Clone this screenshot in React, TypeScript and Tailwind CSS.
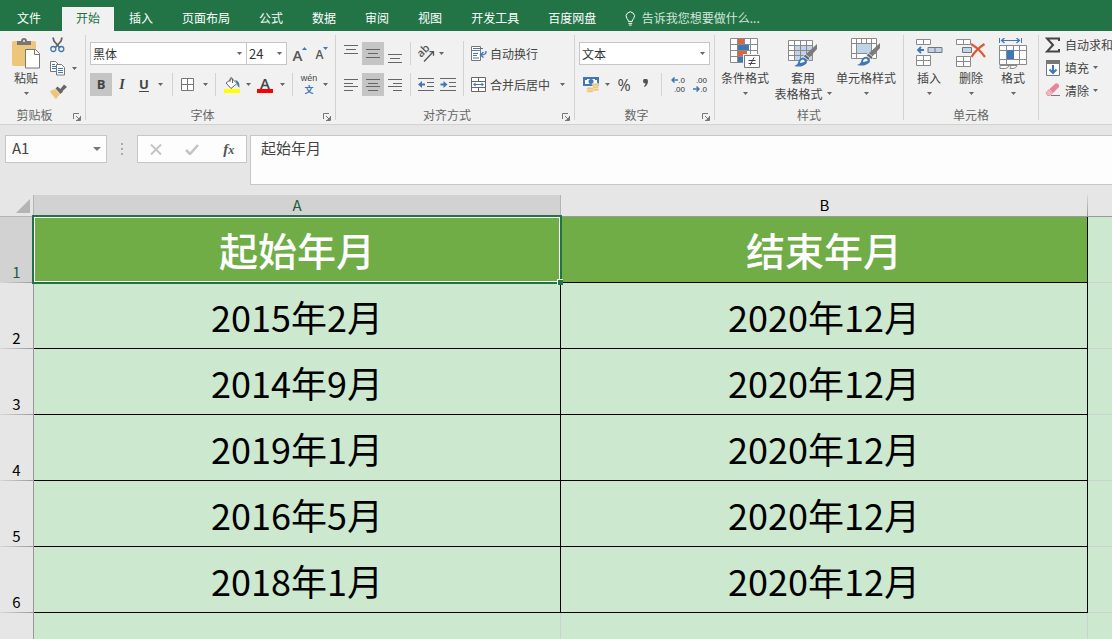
import { type ReactNode } from 'react'
import clsx from 'clsx'

// ─── Data ─────────────────────────────────────────────────────────────────────

const TABS = ['开始', '插入', '页面布局', '公式', '数据', '审阅', '视图', '开发工具', '百度网盘']

const ROWS = [
  ['起始年月', '结束年月'],
  ['2015年2月', '2020年12月'],
  ['2014年9月', '2020年12月'],
  ['2019年1月', '2020年12月'],
  ['2016年5月', '2020年12月'],
  ['2018年1月', '2020年12月'],
  ['', ''],
]

// ─── Small parts ──────────────────────────────────────────────────────────────

function Caret() {
  return (
    <svg width="5" height="3" viewBox="0 0 5 3" className="shrink-0" aria-hidden="true">
      <path d="M0 0h5L2.5 3z" fill="#666" />
    </svg>
  )
}

function MoreButton({ label, className }: { label: string; className?: string }) {
  return (
    <button aria-label={label} className={clsx('flex h-full w-2 items-center justify-center', className)}>
      <Caret />
    </button>
  )
}

function Tool({ label, active, className, children }: { label: string; active?: boolean; className: string; children: ReactNode }) {
  return (
    <button
      aria-label={label}
      className={clsx('flex h-full shrink-0 items-center justify-center', active && 'bg-[#c5c5c5]', className)}
    >
      {children}
    </button>
  )
}

function Divider({ className }: { className?: string }) {
  return <div className={clsx('w-px shrink-0 self-stretch bg-[#d2d2d2]', className)} />
}

function Row({ children }: { children: ReactNode }) {
  return <div className="flex h-[23px] items-center">{children}</div>
}

function Group({ label, launcher, className, children }: { label: string; launcher?: boolean; className: string; children: ReactNode }) {
  return (
    <>
      <section aria-label={label} className={clsx('flex shrink-0 flex-col justify-between pb-px', className)}>
        <div className="flex">{children}</div>
        <div className="flex h-4 items-center text-[#666]">
          <span className="flex-1 text-center">{label}</span>
          {launcher && (
            <button aria-label={`${label}设置`} className="flex w-4 justify-center pt-1">
              <svg width="8" height="8" viewBox="0 0 8 8" fill="none" stroke="#777">
                <path d="M.5 6V.5H6M3 3l3 3M7.5 3v4.500H3" />
                <path d="M7 4v3H4z" fill="#777" stroke="none" />
              </svg>
            </button>
          )}
        </div>
      </section>
      <Divider className="mt-1 mb-1" />
    </>
  )
}

function BigButton({ icon, label, second, className }: { icon: ReactNode; label: string; second?: string; className: string }) {
  return (
    <button className={clsx('flex shrink-0 flex-col items-center pt-[7px] leading-[15px] whitespace-nowrap', className)}>
      <span className="flex h-8 items-start">{icon}</span>
      <span>{label}</span>
      <span className="flex h-4 items-center gap-1">
        {second}
        <Caret />
      </span>
    </button>
  )
}

function Picker({ label, value, className }: { label: string; value: string; className: string }) {
  return (
    <div className={clsx('grid h-[23px] shrink-0 items-center border border-[#c6c6c6] bg-white', className)}>
      <select
        aria-label={label}
        defaultValue={value}
        className="col-start-1 row-start-1 h-full w-full appearance-none bg-transparent pl-0.5 text-[#333] outline-none"
      >
        <option>{value}</option>
      </select>
      <span className="pointer-events-none col-start-1 row-start-1 justify-self-end pr-1">
        <Caret />
      </span>
    </div>
  )
}

// ─── Icons ────────────────────────────────────────────────────────────────────

function PasteIcon() {
  return (
    <svg width="28" height="31" viewBox="0 0 28 31">
      <path d="M0 5q0-2 2-2h20q2 0 2 2v23H2q-2 0-2-2z" fill="#eec679" />
      <path d="M5 7V3h4a3 3 0 0 1 6 0h4v4z" fill="#777" />
      <circle cx="12" cy="3" r="1" fill="#f1f1f1" />
      <path d="M13.500 11.500h10l4 4v14.500h-14z" fill="#fff" stroke="#777" />
      <path d="M22.500 11.500v5h5" fill="none" stroke="#777" />
    </svg>
  )
}

function CutIcon() {
  return (
    <svg width="15" height="16" viewBox="0 0 15 16" fill="none">
      <path d="M3 .5 4 4l6 7M12 .5 11 4l-6 7" stroke="#666" strokeWidth="1.800" />
      <circle cx="3.300" cy="12" r="2.500" stroke="#3f78b5" strokeWidth="1.300" />
      <circle cx="11.300" cy="12" r="2.500" stroke="#3f78b5" strokeWidth="1.300" />
    </svg>
  )
}

function CopyIcon() {
  return (
    <svg width="16" height="15" viewBox="0 0 16 15" fill="#fff" stroke="#777">
      <path d="M.5.5h5l3 3v7h-8z" />
      <path d="M2 3.500h3M2 5.500h4M2 7.500h4" stroke="#3f78b5" />
      <path d="M6.500 3.500h5l3 3v7.500h-8z" />
      <path d="M8 7.500h5M8 9.500h5M8 11.500h5" stroke="#3f78b5" />
    </svg>
  )
}

function BrushIcon() {
  return (
    <svg width="17" height="15" viewBox="0 0 17 15">
      <path d="M0 7 5 5l5 5-4 5q-2-1-2.500-3Q1 10 0 7z" fill="#eec679" />
      <path d="m5.500 4.500 2-2L11.500 6 13 7.500 10.500 10z" fill="#666" />
      <path d="m10 5.500 4-5 3 2.500-5 4.500z" fill="#666" />
    </svg>
  )
}

function FontStep({ up }: { up?: boolean }) {
  return (
    <span className="flex h-3.5 items-end text-[#555]">
      <span className={clsx('font-[Open_Sans] leading-3 font-semibold', up ? 'text-[15px]' : 'text-xs')}>A</span>
      <svg width="5" height="3" viewBox="0 0 5 3" className="self-start">
        <path d={up ? 'M0 3h5L2.500 0z' : 'M0 0h5L2.500 3z'} fill="#3f78b5" />
      </svg>
    </span>
  )
}

function BorderIcon() {
  return (
    <svg width="13" height="13" viewBox="0 0 13 13" fill="#fff" stroke="#777">
      <path d="M.5.5h12v12H.5zM6.500.5v12M.5 6.500h12" />
    </svg>
  )
}

function FillIcon() {
  return (
    <svg width="16" height="16" viewBox="0 0 16 16">
      <path d="m2 6 6-4.500 5 5L7 11.500z" fill="#fff" stroke="#666" />
      <path d="M6 5V1.500q1.500-2 2.500 0V6" fill="none" stroke="#666" />
      <path d="M11 3Q16 3.500 15.500 10.500q-2-.5-2.500-4z" fill="#3f78b5" />
      <path d="M0 12h16v4H0z" fill="#ff0" />
    </svg>
  )
}

const VALIGN_Y = { top: 0, middle: 4, bottom: 9 }

function VAlignIcon({ at }: { at: keyof typeof VALIGN_Y }) {
  return (
    <svg width="14" height="18" viewBox="0 0 14 18" stroke="#666">
      <path d={`M0 ${VALIGN_Y[at] + 0.5}h14m-12 4h10m-12 4h14`} />
    </svg>
  )
}

const HALIGN = {
  left: 'M0 .5h14M0 4.500h9M0 7.500h14M0 11.500h9',
  center: 'M0 .5h14M2 4.500h10M0 7.500h14M2 11.500h10',
  right: 'M0 .5h14M5 4.500h9M0 7.500h14M5 11.500h9',
}

function HAlignIcon({ at }: { at: keyof typeof HALIGN }) {
  return (
    <svg width="14" height="12" viewBox="0 0 14 12" stroke="#666">
      <path d={HALIGN[at]} />
    </svg>
  )
}

function OrientIcon() {
  return (
    <svg width="17" height="16" viewBox="0 0 17 16">
      <text x="3" y="12" transform="rotate(-45 3 12)" fill="#555" className="font-[Open_Sans] text-[11px] font-semibold">
        ab
      </text>
      <path d="m6 15.500 9-9.500M11.500 5.700h4v4" fill="none" stroke="#555" strokeWidth="1.300" />
    </svg>
  )
}

function IndentIcon({ out }: { out?: boolean }) {
  return (
    <svg width="16" height="13" viewBox="0 0 16 13">
      <path d="M0 .5h16M9 4.500h7M9 8.500h7M0 12.500h16" stroke="#666" />
      <path d={out ? 'M0 6.500 4 3v2.500h3v2H4V10z' : 'M7.500 6.500 3.500 3v2.500h-3v2h3V10z'} fill="#3f78b5" />
    </svg>
  )
}

function WrapIcon() {
  return (
    <svg width="16" height="15" viewBox="0 0 16 15" fill="none">
      <path d="M.5.5h9v4h-9zM.5 4.500h9v10h-9z" fill="#fff" stroke="#777" />
      <path d="M2 2.500h10M2 7.500h5M2 9.500h4M2 12h6" stroke="#3f78b5" />
      <path d="M15 5q.5 4-5 4m2.500-3L9.500 9l3 2.500" stroke="#3f78b5" strokeWidth="1.400" />
    </svg>
  )
}

function MergeIcon() {
  return (
    <svg width="16" height="15" viewBox="0 0 16 15">
      <path d="M.5.5h14v14H.5zM.5 4.500h14M.5 10.500h14M7.500.5v4M7.500 10.500v4" fill="#fff" stroke="#666" />
      <path d="M3 7.500h9" stroke="#3f78b5" />
      <path d="M2 7.500 4.500 5.500v4zM13 7.500 10.500 5.500v4z" fill="#3f78b5" />
    </svg>
  )
}

function MoneyIcon() {
  return (
    <svg width="17" height="16" viewBox="0 0 17 16">
      <path d="M0 0h16v9H0z" fill="#3f78b5" />
      <path d="M2 2h12v5H2z" fill="#fff" />
      <circle cx="8" cy="4.500" r="2.500" fill="#3f78b5" />
      <path d="M2 2h2v1H2zM12 2h2v1h-2z" fill="#3f78b5" />
      <g fill="#eec679" stroke="#f1f1f1" strokeWidth=".5">
        <ellipse cx="12.500" cy="12.500" rx="3.500" ry="1.500" />
        <ellipse cx="12.500" cy="10" rx="3.500" ry="1.500" />
        <ellipse cx="12.500" cy="7.500" rx="3.500" ry="1.500" />
        <ellipse cx="7" cy="14" rx="3.500" ry="1.500" />
        <ellipse cx="7" cy="11.500" rx="3.500" ry="1.500" />
      </g>
    </svg>
  )
}

function DecimalIcon({ more }: { more?: boolean }) {
  const arrow = (
    <svg width="7" height="6" viewBox="0 0 7 6">
      <path d={more ? 'M7 3H1m2.500-2.500L1 3l2.500 2.500' : 'M0 3h6M3.500.5 6 3 3.500 5.500'} fill="none" stroke="#3f78b5" strokeWidth="1.500" />
    </svg>
  )
  return (
    <span className="flex w-4 flex-col items-end font-[Liberation_Sans] text-[8px] leading-[9px] text-[#333]">
      <span className="flex items-center">{more && arrow}{more ? '.0' : '.00'}</span>
      <span className="flex items-center">{!more && arrow}{more ? '.00' : '.0'}</span>
    </span>
  )
}

function ConditionalIcon() {
  return (
    <svg width="30" height="31" viewBox="0 0 30 31">
      <path d="M.5.5h27v24H.5z" fill="#fff" />
      <path d="M8 1h6v5H8zM8 13h9v5H8z" fill="#de6440" />
      <path d="M8 7h11v5H8zM8 19h5v6H8z" fill="#3f78b5" />
      <path d="M.5.5h27v24H.5zM7.500.5v24M14.500.5v6M20.500.5v24M.5 6.500h27M.5 12.500h27M.5 18.500h27" fill="none" stroke="#8a8a8a" />
      <path d="M13 16h17v15H13z" fill="#f1f1f1" />
      <path d="M14.500 17.500h15v12h-15z" fill="#fff" stroke="#777" />
      <path d="M18.500 22.500h7M18.500 25.500h7M24 19.500l-4 8" stroke="#444" fill="none" />
    </svg>
  )
}

function StyleBrush() {
  return (
    <>
      <path d="M29 6v5l-8 9-4-3z" fill="#7b7b7b" />
      <path d="m17 16 5 4-1.500 2.500-5-4z" fill="#666" stroke="#f1f1f1" strokeWidth=".8" />
      <path d="M6 28q4-1 4.500-5 2-4 6-3 3.500 2 2 5.500Q14 30 6 28z" fill="#3f78b5" />
      <path d="M12 25q0-3 3-3.500 2 .5 1.500 2.500z" fill="#fff" />
    </>
  )
}

function TableFormatIcon() {
  return (
    <svg width="30" height="31" viewBox="0 0 30 31">
      <path d="M.5 2.500h24v20H.5z" fill="#fff" />
      <path d="M7 8h17v14H7z" fill="#c0d3ea" />
      <path d="M.5 2.500h24v20H.5zM6.500 2.500v20M12.500 2.500v20M18.500 2.500v20M.5 7.500h24M.5 12.500h24M.5 17.500h24" fill="none" stroke="#8a8a8a" />
      <StyleBrush />
    </svg>
  )
}

function CellStyleIcon() {
  return (
    <svg width="30" height="31" viewBox="0 0 30 31">
      <path d="M.5.5h25v20H.5z" fill="#fff" stroke="#8a8a8a" />
      <path d="M.5 5.500h25M.5 15.500h25M5.500.5v20M20.500.5v20M10.500.5v5M15.500.5v5" stroke="#8a8a8a" />
      <path d="M6 6h14v9H6z" fill="#c0d3ea" />
      <g transform="translate(0 -1)">
        <StyleBrush />
      </g>
    </svg>
  )
}

function InsertIcon() {
  return (
    <svg width="27" height="29" viewBox="0 0 27 29">
      <path d="M.5 1.500h14v5H.5zM7.500 1.500v5M.5 17.500h14v10H.5zM.5 22.500h14M7.500 17.500v10" fill="#fff" stroke="#8a8a8a" />
      <path d="M12 9.500h14v5H12zM19 9.500v5" fill="#c0d3ea" stroke="#777" />
      <path d="M8 12H2m3-3-3 3 3 3" fill="none" stroke="#3f78b5" strokeWidth="1.800" />
    </svg>
  )
}

function DeleteIcon() {
  return (
    <svg width="30" height="29" viewBox="0 0 30 29">
      <path d="M.5 1.500h14v5H.5zM7.500 1.500v5M.5 18.500h14v10H.5zM.5 23.500h14M7.500 18.500v10" fill="#fff" stroke="#8a8a8a" />
      <path d="M6.500 9.500h9v5h-9z" fill="#c0d3ea" stroke="#777" />
      <path d="M15 6q5 3 8 6 3 3 6 7M28.500 6q-9 6-13 13" fill="none" stroke="#de5a37" strokeWidth="2.200" />
    </svg>
  )
}

function FormatIcon() {
  return (
    <svg width="28" height="32" viewBox="0 0 28 32">
      <path d="M.5 0v5M22.500 0v5M3 2.500h17" stroke="#3f78b5" />
      <path d="m5.500 0-3 2.500 3 2.500M17.500 0l3 2.500-3 2.500" fill="none" stroke="#3f78b5" strokeWidth="1.300" />
      <path d="M.5 7.500h27v19H.5zM.5 12.500h27M.5 21.500h27M7.500 7.500v19M14.500 7.500v5M20.500 7.500v19" fill="#fff" stroke="#8a8a8a" />
      <path d="M8 12h7v9H8z" fill="#3f78b5" />
      <path d="M1 27.500h17q-1 3-4 3H11q2-3-1-3-1 3-4 3H1z" fill="#fff" stroke="#8a8a8a" />
    </svg>
  )
}

function SigmaIcon() {
  return (
    <svg width="16" height="16" viewBox="0 0 16 16">
      <path d="M14 4V1.500H2L8 8l-6 6.500h12V12" fill="none" stroke="#444" strokeWidth="2" />
    </svg>
  )
}

function FillDownIcon() {
  return (
    <svg width="16" height="16" viewBox="0 0 16 16">
      <path d="M1.500.5h13v15h-13z" fill="#fff" stroke="#777" />
      <path d="M1 0h14v4H1z" fill="#777" />
      <path d="M8 5v8M4.500 9.500 8 13l3.500-3.500" fill="none" stroke="#3f78b5" strokeWidth="2" />
    </svg>
  )
}

function EraserIcon() {
  return (
    <svg width="16" height="16" viewBox="0 0 16 16">
      <path d="m4.500 6 6-5.500q2-1 3.500 1.500v2L8 10z" fill="#e8849b" />
      <path d="m4 6.500 3.500 3.500-2.500 2.500H2.500L1 10z" fill="#f3b6c3" stroke="#e8849b" strokeWidth=".8" />
      <path d="M6 12.500h9" stroke="#777" />
    </svg>
  )
}

// ─── Ribbon ───────────────────────────────────────────────────────────────────

function TabBar() {
  return (
    <header className="flex h-[31px] shrink-0 items-end gap-px bg-[#227447] text-xs text-white">
      <button className="h-6 pr-5 pb-0.5 pl-[17px]">文件</button>
      {TABS.map((tab, i) => (
        <button key={tab} className={clsx('h-6 shrink-0 px-3.5 pb-0.5', i === 0 && 'bg-[#f1f1f1] text-[#217346]')}>
          {tab}
        </button>
      ))}
      <label className="ml-3.5 flex h-6 flex-1 items-center gap-1.5 pb-0.5 text-[#d3e5da]">
        <svg width="11" height="15" viewBox="0 0 11 15" fill="none" stroke="#fff" aria-hidden="true">
          <path d="M3.500 10.500q0-1.500-1.500-3a4.300 4.300 0 1 1 7 0q-1.500 1.500-1.500 3zM3.500 12.500h4M4 14.300h3" />
        </svg>
        <input
          aria-label="告诉我"
          placeholder="告诉我您想要做什么..."
          className="w-full bg-transparent outline-none placeholder:text-[#d3e5da]"
        />
      </label>
    </header>
  )
}

function Ribbon() {
  return (
    <div className="flex h-[94px] shrink-0 overflow-hidden border-b border-[#d2d2d2] bg-[#f1f1f1] text-xs text-[#444]">
      <Group label="剪贴板" launcher className="w-[85px]">
        <BigButton icon={<PasteIcon />} label="粘贴" className="ml-3 w-7" />
        <div className="ml-2.5 flex flex-col gap-[7px] pt-1.5">
          <button aria-label="剪切" className="flex h-4 items-center">
            <CutIcon />
          </button>
          <div className="flex h-4 items-center gap-1">
            <button aria-label="复制">
              <CopyIcon />
            </button>
            <MoreButton label="复制选项" />
          </div>
          <button aria-label="格式刷" className="flex h-4 items-center">
            <BrushIcon />
          </button>
        </div>
      </Group>

      <Group label="字体" launcher className="w-[249px]">
        <div className="flex flex-col gap-2 pt-[11px] pl-1">
          <Row>
            <Picker label="字体" value="黑体" className="w-[157px]" />
            <Picker label="字号" value="24" className="-ml-px w-[41px] text-[13px]" />
            <Tool label="增大字号" className="ml-0.5 w-[22px]">
              <FontStep up />
            </Tool>
            <Tool label="减小字号" className="w-[22px]">
              <FontStep />
            </Tool>
          </Row>
          <Row>
            <Tool label="加粗" active className="w-[22px] font-[Open_Sans] text-[13px] font-bold">
              B
            </Tool>
            <Tool label="倾斜" className="w-5 font-[Liberation_Serif] text-sm font-bold italic">
              I
            </Tool>
            <Tool label="下划线" className="w-6 font-[Open_Sans] text-[13px] font-bold underline underline-offset-2">
              U
            </Tool>
            <MoreButton label="下划线样式" />
            <Divider className="ml-2" />
            <Tool label="边框" className="w-7">
              <BorderIcon />
            </Tool>
            <MoreButton label="边框样式" />
            <Divider className="ml-1.5" />
            <Tool label="填充颜色" className="w-8">
              <FillIcon />
            </Tool>
            <MoreButton label="更多填充颜色" className="-ml-1" />
            <Tool label="字体颜色" className="w-[26px]">
              <span className="flex h-4 w-4 items-end justify-center border-b-4 border-[#f00] font-[Open_Sans] text-[15px] leading-3 font-semibold">
                A
              </span>
            </Tool>
            <MoreButton label="更多字体颜色" />
            <Divider className="ml-1.5" />
            <Tool label="拼音" className="w-8">
              <span className="flex flex-col items-center text-[9px]">
                <span className="font-[Liberation_Sans] leading-[10px]">wén</span>
                <span className="leading-[13px] font-bold text-[#3f78b5]">文</span>
              </span>
            </Tool>
            <MoreButton label="拼音选项" className="-ml-1" />
          </Row>
        </div>
      </Group>

      <Group label="对齐方式" launcher className="w-[238px]">
        <div className="flex flex-col gap-2 pt-[11px] pl-1">
          <Row>
            <Tool label="顶端对齐" className="w-[22px]">
              <VAlignIcon at="top" />
            </Tool>
            <Tool label="垂直居中" active className="w-[22px]">
              <VAlignIcon at="middle" />
            </Tool>
            <Tool label="底端对齐" className="w-[22px]">
              <VAlignIcon at="bottom" />
            </Tool>
            <Divider className="mx-1" />
            <Tool label="方向" className="w-[22px]">
              <OrientIcon />
            </Tool>
            <MoreButton label="方向选项" />
          </Row>
          <Row>
            <Tool label="左对齐" className="w-[22px]">
              <HAlignIcon at="left" />
            </Tool>
            <Tool label="居中" active className="w-[22px]">
              <HAlignIcon at="center" />
            </Tool>
            <Tool label="右对齐" className="w-[22px]">
              <HAlignIcon at="right" />
            </Tool>
            <Divider className="mx-1" />
            <Tool label="减少缩进量" className="w-[22px]">
              <IndentIcon out />
            </Tool>
            <Tool label="增加缩进量" className="w-[22px]">
              <IndentIcon />
            </Tool>
          </Row>
        </div>
        <Divider className="mt-2.5 ml-1" />
        <div className="flex flex-col gap-2 pt-[11px] pl-[7px]">
          <Row>
            <button className="flex items-center gap-[3px]">
              <WrapIcon />
              自动换行
            </button>
          </Row>
          <Row>
            <button className="flex items-center gap-[3px]">
              <MergeIcon />
              合并后居中
            </button>
            <MoreButton label="合并选项" className="ml-2" />
          </Row>
        </div>
      </Group>

      <Group label="数字" launcher className="w-[139px]">
        <div className="flex flex-col gap-2 pt-[11px] pl-1">
          <Row>
            <Picker label="数字格式" value="文本" className="w-[131px]" />
          </Row>
          <Row>
            <Tool label="会计数字格式" className="w-6">
              <MoneyIcon />
            </Tool>
            <MoreButton label="货币选项" />
            <Tool label="百分比样式" className="w-[26px] font-[Open_Sans] text-base font-medium">
              %
            </Tool>
            <Tool label="千位分隔样式" className="w-[18px]">
              <svg width="6" height="12" viewBox="0 0 6 12">
                <path d="M0 2.200a2.200 2.200 0 0 1 5 0Q5 6 1.500 8L1 7q1.500-1 1.500-2.500Q0 4.500 0 2.200z" fill="#555" />
              </svg>
            </Tool>
            <Divider className="mr-1 ml-1.5" />
            <Tool label="增加小数位数" className="w-[22px]">
              <DecimalIcon more />
            </Tool>
            <Tool label="减少小数位数" className="w-[22px]">
              <DecimalIcon />
            </Tool>
          </Row>
        </div>
      </Group>

      <Group label="样式" className="w-[188px]">
        <div className="flex gap-[3px] pl-1">
          <BigButton icon={<ConditionalIcon />} label="条件格式" className="w-[52px]" />
          <BigButton icon={<TableFormatIcon />} label="套用" second="表格格式" className="w-[58px]" />
          <BigButton icon={<CellStyleIcon />} label="单元格样式" className="w-[62px]" />
        </div>
      </Group>

      <Group label="单元格" className="w-[134px]">
        <div className="flex pl-1">
          <BigButton icon={<InsertIcon />} label="插入" className="w-[42px]" />
          <BigButton icon={<DeleteIcon />} label="删除" className="w-[42px]" />
          <BigButton icon={<FormatIcon />} label="格式" className="w-[42px]" />
        </div>
      </Group>

      <section aria-label="编辑" className="flex min-w-0 flex-1 flex-col items-start overflow-hidden pt-0.5 pl-1.5 whitespace-nowrap">
        <button className="flex h-[23px] items-center gap-1">
          <SigmaIcon />
          自动求和
        </button>
        <button className="flex h-[23px] items-center gap-1">
          <FillDownIcon />
          填充
          <Caret />
        </button>
        <button className="flex h-[23px] items-center gap-1">
          <EraserIcon />
          清除
          <Caret />
        </button>
      </section>
    </div>
  )
}

// ─── Formula bar ──────────────────────────────────────────────────────────────

function FormulaBar() {
  return (
    <div className="flex h-[70px] shrink-0 items-start pt-2.5 pl-[5px] text-[15px] text-[#444]">
      <div className="flex h-7 w-[102px] shrink-0 items-center border border-[#c6c6c6] bg-[#fdfdfd] pr-[5px]">
        <input aria-label="名称框" defaultValue="A1" className="w-full min-w-0 flex-1 bg-transparent pb-0.5 pl-1.5 outline-none" />
        <button aria-label="名称列表">
          <svg width="8" height="4" viewBox="0 0 8 4">
            <path d="M0 0h8L4 4z" fill="#777" />
          </svg>
        </button>
      </div>
      <svg width="30" height="28" viewBox="0 0 30 28" className="shrink-0" fill="#aaa" aria-hidden="true">
        <path d="M14 8h2v2h-2zM14 13h2v2h-2zM14 18h2v2h-2z" />
      </svg>
      <div className="flex h-7 w-[110px] shrink-0 items-center justify-around border border-[#c6c6c6] bg-[#fdfdfd]">
        <button aria-label="取消">
          <svg width="12" height="11" viewBox="0 0 12 11">
            <path d="m1 .5 10 10M11 .5l-10 10" stroke="#c4c4c4" strokeWidth="2" />
          </svg>
        </button>
        <button aria-label="输入">
          <svg width="14" height="11" viewBox="0 0 14 11">
            <path d="m1 6 4 4 8-9" fill="none" stroke="#c4c4c4" strokeWidth="2.500" />
          </svg>
        </button>
        <button aria-label="插入函数" className="font-[Liberation_Serif] leading-5 font-bold text-[#555] italic">
          f<span className="text-xs">x</span>
        </button>
      </div>
      <textarea
        aria-label="编辑栏"
        defaultValue="起始年月"
        className="ml-[3px] h-[50px] min-w-0 flex-1 resize-none border border-r-0 border-[#c6c6c6] bg-[#fdfdfd] px-2.5 py-px leading-[22px] outline-none"
      />
    </div>
  )
}

// ─── Sheet ────────────────────────────────────────────────────────────────────

function Sheet() {
  return (
    <main className="min-h-0 flex-1 overflow-hidden bg-[#cce8cf]">
      <table className="w-full table-fixed border-separate border-spacing-0 text-center">
        <colgroup>
          <col className="w-[34px]" />
          <col className="w-[527px]" />
          <col className="w-[527px]" />
          <col />
        </colgroup>
        <thead className="text-[15px] leading-[19px]">
          <tr className="h-[22px]">
            <th className="border-r border-b border-[#b4b4b4] bg-[#e6e6e6] p-0">
              <button aria-label="全选" className="flex w-full justify-end pr-[3px]">
                <svg width="14" height="14" viewBox="0 0 14 14">
                  <path d="M14 0v14H0z" fill="#b4b4b4" />
                </svg>
              </button>
            </th>
            <th className="border-r border-b border-[#b4b4b4] bg-[#d2d2d2] p-0 pb-0.5 font-normal text-[#215c40]">A</th>
            <th className="border-b border-[#999] bg-[#e6e6e6] bg-[linear-gradient(to_bottom,#d8d8d8,#999)] bg-[length:1px_100%] bg-right bg-no-repeat p-0 pb-0.5 font-normal">
              B
            </th>
            <th className="border-b border-[#999] bg-[#e6e6e6] p-0" />
          </tr>
        </thead>
        <tbody className="text-4xl text-black">
          {ROWS.map(([start, end], i) => {
            const filled = start !== ''
            const cell = clsx(
              'border-r border-b p-0',
              filled ? 'border-black' : 'border-[#d0d0d4]',
              i === 0 && 'bg-[#70ad47] text-[39px] font-medium text-white',
            )
            return (
              <tr key={i} className="h-[66px]">
                <th
                  className={clsx(
                    'border-r border-[#999] bg-[linear-gradient(to_right,#d8d8d8,#999)] bg-[length:100%_1px] bg-bottom bg-no-repeat p-0 pb-px align-bottom text-[15px] leading-5 font-normal',
                    i === 0 ? 'bg-[#d2d2d2] text-[#215c40]' : 'bg-[#e6e6e6]',
                  )}
                >
                  {filled && i + 1}
                </th>
                <td className={clsx(cell, i === 0 && 'relative')}>
                  {start}
                  {i === 0 && (
                    <>
                      <div className="pointer-events-none absolute -inset-0.5 z-10 border-2 border-[#217346]">
                        <div className="h-full border border-white" />
                      </div>
                      <div className="absolute -right-[3px] -bottom-[3px] z-10 size-1.5 border-t border-l border-white bg-[#217346]" />
                    </>
                  )}
                </td>
                <td className={cell}>{end}</td>
                <td className="border-b border-[#d0d0d4] p-0" />
              </tr>
            )
          })}
        </tbody>
      </table>
    </main>
  )
}

export default function App() {
  return (
    <div className="flex h-screen flex-col overflow-hidden bg-[#e6e6e6] font-['Noto_Sans_CJK_SC',sans-serif]">
      <TabBar />
      <Ribbon />
      <FormulaBar />
      <Sheet />
    </div>
  )
}
